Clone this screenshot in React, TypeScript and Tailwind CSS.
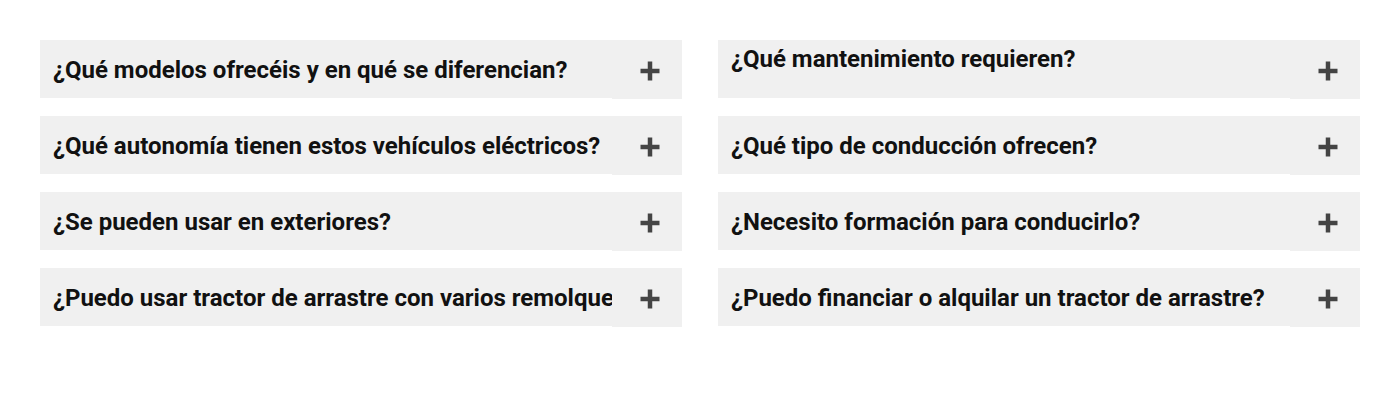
import { useState } from "react";

interface Faq {
  q: string;
  raised?: boolean;
}

const left: Faq[] = [
  { q: "¿Qué modelos ofrecéis y en qué se diferencian?" },
  { q: "¿Qué autonomía tienen estos vehículos eléctricos?" },
  { q: "¿Se pueden usar en exteriores?" },
  { q: "¿Puedo usar tractor de arrastre con varios remolques?" },
];

const right: Faq[] = [
  { q: "¿Qué mantenimiento requieren?", raised: true },
  { q: "¿Qué tipo de conducción ofrecen?" },
  { q: "¿Necesito formación para conducirlo?" },
  { q: "¿Puedo financiar o alquilar un tractor de arrastre?" },
];

function PlusIcon() {
  return (
    <svg width="20" height="20" viewBox="0 0 20 20" fill="none">
      <path d="M10 0.5v19M0.5 10h19" stroke="#444444" strokeWidth="4.5" />
    </svg>
  );
}

function FaqItem({ item }: { item: Faq }) {
  const [open, setOpen] = useState(false);

  return (
    <div className="bg-[#f0f0f0]">
      <div className="flex h-[58px]">
        <div className="flex flex-1 items-center overflow-hidden whitespace-nowrap pl-[13px] pt-[2px]">
          <span className={item.raised ? "mb-[22px]" : ""}>{item.q}</span>
        </div>
        <button
          onClick={() => setOpen(!open)}
          className="flex h-[59px] w-[70px] shrink-0 items-center justify-center bg-[#f0f0f0] pl-[6px] pt-[2px]"
        >
          <PlusIcon />
        </button>
      </div>
      {open && <div className="px-[13px] pb-4 text-base font-normal">…</div>}
    </div>
  );
}

export default function App() {
  return (
    <main className="h-[400px] bg-white px-10 pt-10 font-['Roboto',sans-serif] text-[24px] font-bold text-[#111]">
      <div className="grid grid-cols-2 gap-x-9">
        {/* Left column */}
        <div className="flex flex-col gap-[18px]">
          {left.map((f) => (
            <FaqItem key={f.q} item={f} />
          ))}
        </div>
        {/* Right column */}
        <div className="flex flex-col gap-[18px]">
          {right.map((f) => (
            <FaqItem key={f.q} item={f} />
          ))}
        </div>
      </div>
    </main>
  );
}
